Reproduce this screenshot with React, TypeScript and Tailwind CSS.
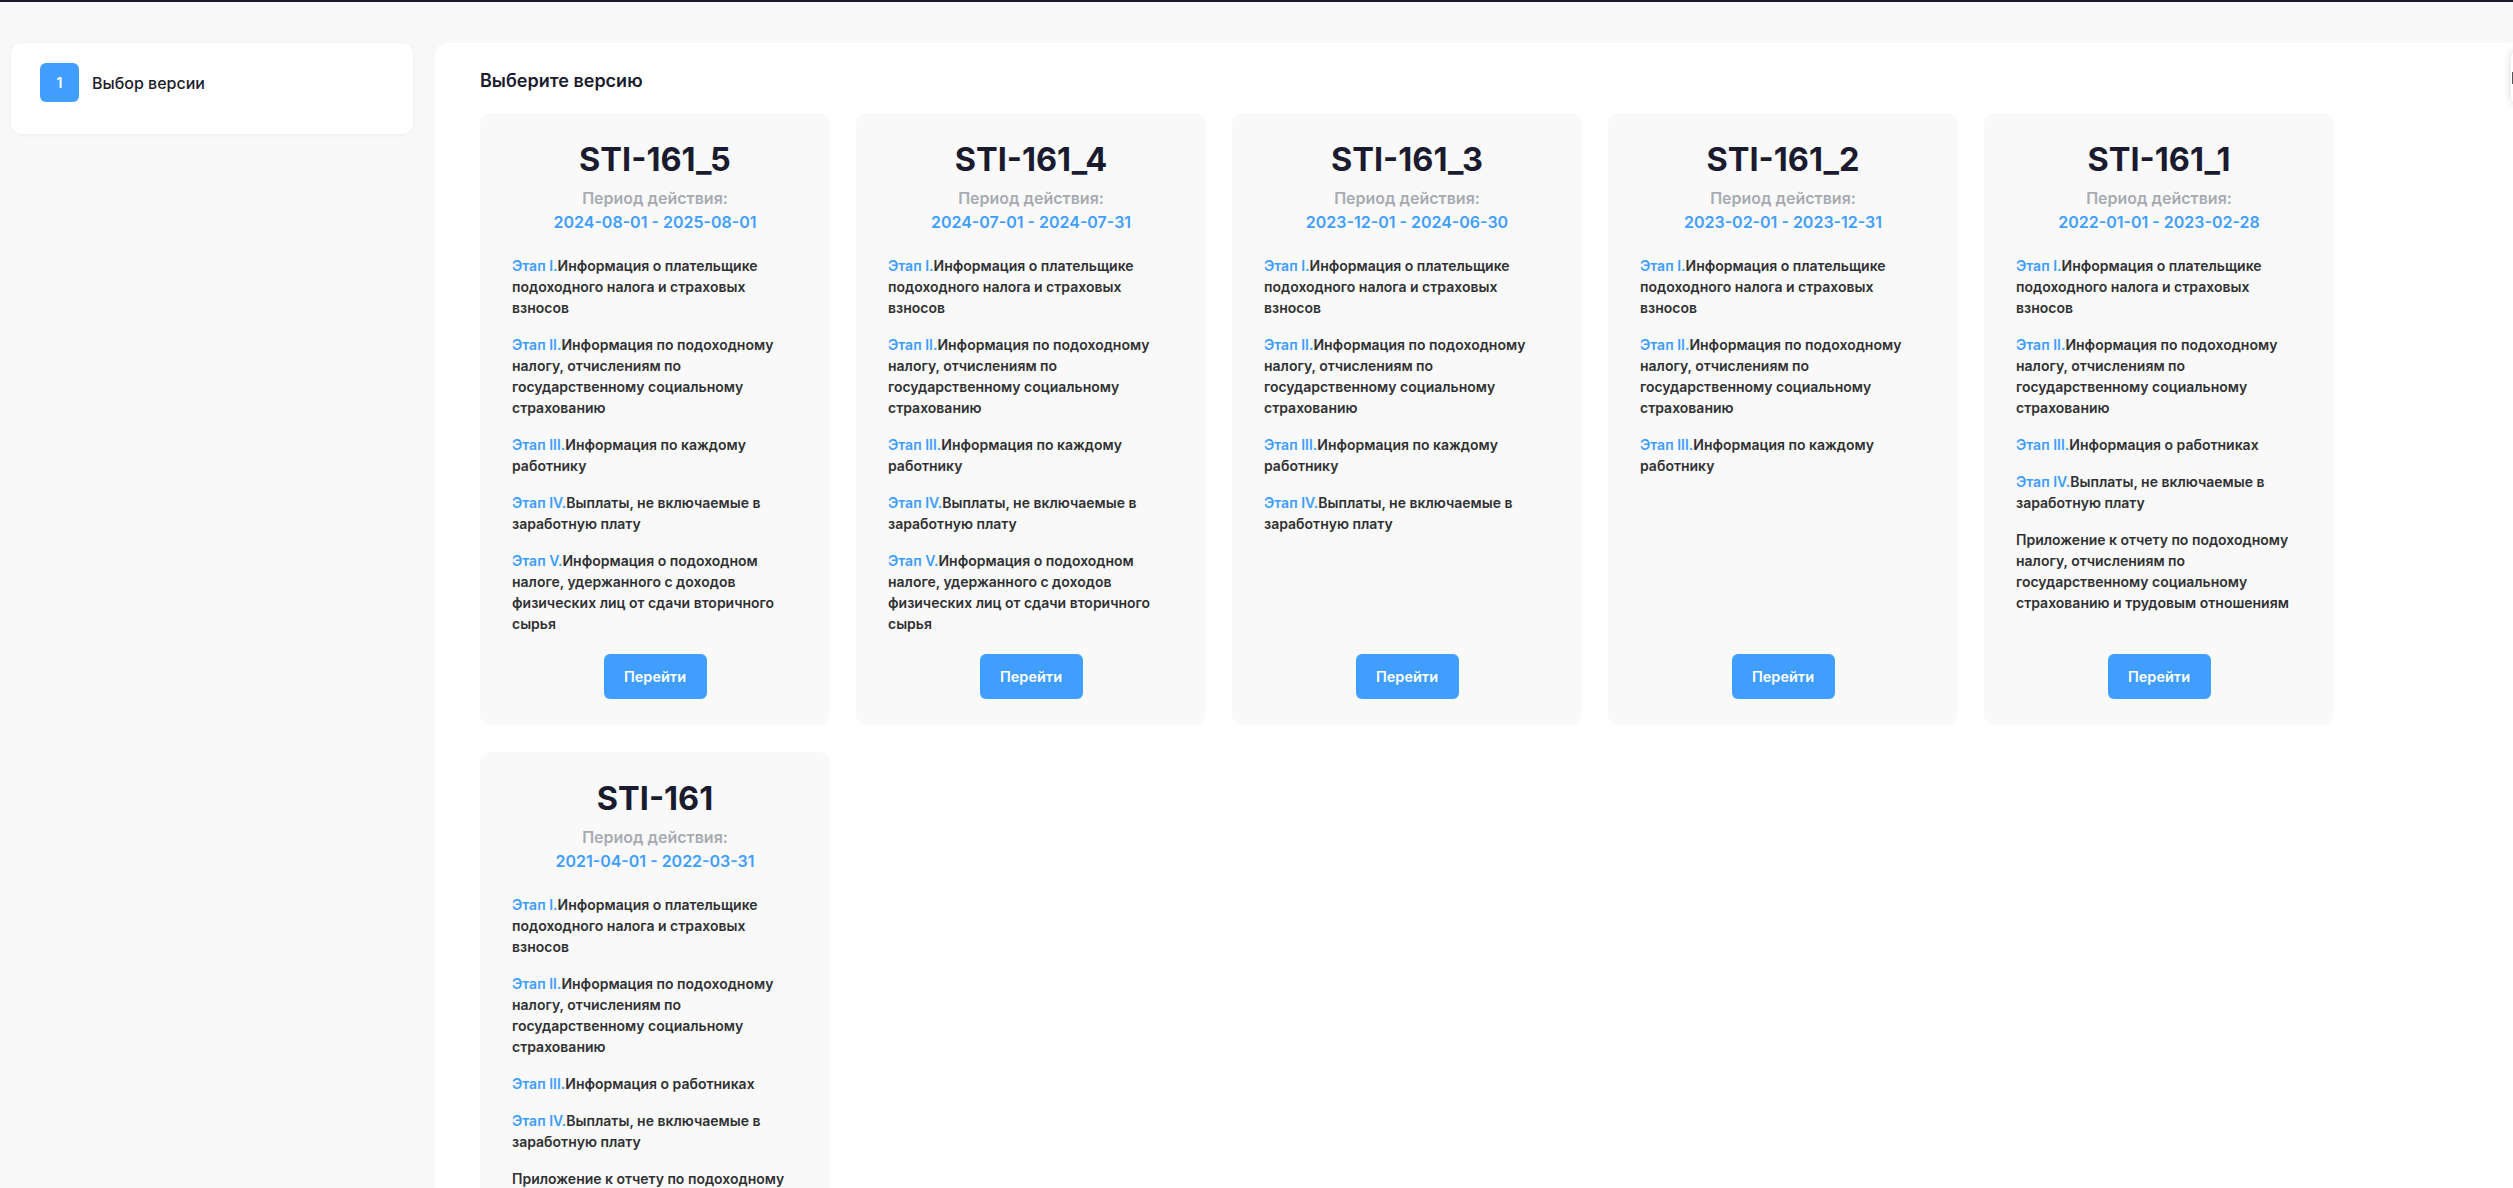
const versions = [
  {
    code: 'STI-161_5',
    period: '2024-08-01 - 2025-08-01',
    stages: [
      { label: 'Этап I.', text: 'Информация о плательщике подоходного налога и страховых взносов' },
      { label: 'Этап II.', text: 'Информация по подоходному налогу, отчислениям по государственному социальному страхованию' },
      { label: 'Этап III.', text: 'Информация по каждому работнику' },
      { label: 'Этап IV.', text: 'Выплаты, не включаемые в заработную плату' },
      { label: 'Этап V.', text: 'Информация о подоходном налоге, удержанного с доходов физических лиц от сдачи вторичного сырья' },
    ],
  },
  {
    code: 'STI-161_4',
    period: '2024-07-01 - 2024-07-31',
    stages: [
      { label: 'Этап I.', text: 'Информация о плательщике подоходного налога и страховых взносов' },
      { label: 'Этап II.', text: 'Информация по подоходному налогу, отчислениям по государственному социальному страхованию' },
      { label: 'Этап III.', text: 'Информация по каждому работнику' },
      { label: 'Этап IV.', text: 'Выплаты, не включаемые в заработную плату' },
      { label: 'Этап V.', text: 'Информация о подоходном налоге, удержанного с доходов физических лиц от сдачи вторичного сырья' },
    ],
  },
  {
    code: 'STI-161_3',
    period: '2023-12-01 - 2024-06-30',
    stages: [
      { label: 'Этап I.', text: 'Информация о плательщике подоходного налога и страховых взносов' },
      { label: 'Этап II.', text: 'Информация по подоходному налогу, отчислениям по государственному социальному страхованию' },
      { label: 'Этап III.', text: 'Информация по каждому работнику' },
      { label: 'Этап IV.', text: 'Выплаты, не включаемые в заработную плату' },
    ],
  },
  {
    code: 'STI-161_2',
    period: '2023-02-01 - 2023-12-31',
    stages: [
      { label: 'Этап I.', text: 'Информация о плательщике подоходного налога и страховых взносов' },
      { label: 'Этап II.', text: 'Информация по подоходному налогу, отчислениям по государственному социальному страхованию' },
      { label: 'Этап III.', text: 'Информация по каждому работнику' },
    ],
  },
  {
    code: 'STI-161_1',
    period: '2022-01-01 - 2023-02-28',
    stages: [
      { label: 'Этап I.', text: 'Информация о плательщике подоходного налога и страховых взносов' },
      { label: 'Этап II.', text: 'Информация по подоходному налогу, отчислениям по государственному социальному страхованию' },
      { label: 'Этап III.', text: 'Информация о работниках' },
      { label: 'Этап IV.', text: 'Выплаты, не включаемые в заработную плату' },
      { label: '', text: 'Приложение к отчету по подоходному налогу, отчислениям по государственному социальному страхованию и трудовым отношениям' },
    ],
  },
  {
    code: 'STI-161',
    period: '2021-04-01 - 2022-03-31',
    stages: [
      { label: 'Этап I.', text: 'Информация о плательщике подоходного налога и страховых взносов' },
      { label: 'Этап II.', text: 'Информация по подоходному налогу, отчислениям по государственному социальному страхованию' },
      { label: 'Этап III.', text: 'Информация о работниках' },
      { label: 'Этап IV.', text: 'Выплаты, не включаемые в заработную плату' },
      { label: '', text: 'Приложение к отчету по подоходному налогу, отчислениям по государственному социальному страхованию и трудовым отношениям' },
    ],
  },
];

type Version = (typeof versions)[number];

const VersionCard = ({ version }: { version: Version }) => {
  return (
    <div className="w-[350px] bg-[#f9f9f9] rounded-[10px] px-8 pt-[27px] pb-[26px] flex flex-col">
      <h2 className="text-center text-[32.5px] leading-10 font-bold text-[#1b1b2f]">{version.code}</h2>
      <div className="mt-1.5 text-center text-base leading-6 font-semibold text-[#a8abb2]">Период действия:</div>
      <div className="text-center text-base leading-6 font-semibold text-[#409eff]">{version.period}</div>

      <div className="mt-[21px] flex flex-col gap-4 text-[14px] leading-[21px] font-semibold text-[#303133]">
        {version.stages.map((stage, i) => (
          <p key={i}>
            {stage.label && <span className="text-[#409eff]">{stage.label}</span>}
            {stage.text}
          </p>
        ))}
      </div>

      <div className="mt-auto pt-5 flex justify-center">
        <button
          type="button"
          className="h-[45px] w-[103px] rounded-md bg-[#409eff] text-white text-[14.5px] font-semibold"
        >
          Перейти
        </button>
      </div>
    </div>
  );
};

const App = () => {
  return (
    <div
      className="relative h-screen overflow-hidden bg-[#f8f8f8] border-t-2 border-[#1b1b2f]"
      style={{ fontFamily: 'Inter, "Noto Sans", sans-serif' }}
    >
      <div className="flex gap-[22px] pl-[11px] pt-[41px] h-full">
        <aside className="w-[402px] shrink-0">
          <div className="h-[91px] bg-white rounded-[10px] shadow-[0_1px_4px_rgba(0,0,0,0.05)] pl-[29px] pt-5">
            <div className="flex items-center gap-[13px]">
              <div className="h-[39px] w-[39px] rounded-md bg-[#409eff] flex items-center justify-center text-white text-sm font-semibold">
                1
              </div>
              <span className="text-base font-medium text-[#1d1d2b]">Выбор версии</span>
            </div>
          </div>
        </aside>

        <main className="flex-1 bg-white rounded-tl-xl pl-[45px] pt-6">
          <h1 className="text-[18px] leading-7 font-semibold text-[#1b1b2f] mb-[18px]">Выберите версию</h1>
          <div className="flex flex-wrap gap-x-[26px] gap-y-[27px]">
            {versions.map((v) => (
              <VersionCard key={v.code} version={v} />
            ))}
          </div>
        </main>
      </div>

      <div className="absolute -right-[40px] top-[48px] h-[55px] w-[42px] rounded-l-lg bg-white shadow-[0_0_10px_rgba(0,0,0,0.15)]">
        <div className="absolute left-[1px] top-[22px] h-[12px] w-[1px] bg-[#555]" />
      </div>
    </div>
  );
};

export default App;
